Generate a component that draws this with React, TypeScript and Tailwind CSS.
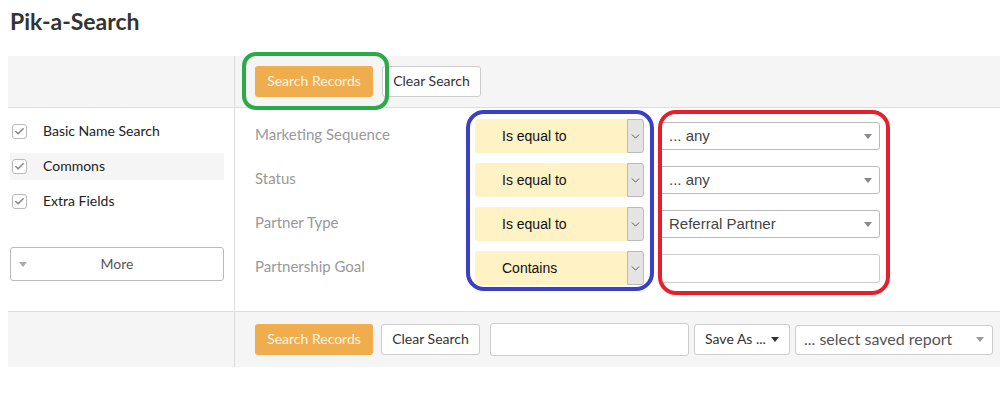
import { Check, ChevronDown } from "lucide-react";

const GROUPS = [
  { label: "Basic Name Search", active: false },
  { label: "Commons", active: true },
  { label: "Extra Fields", active: false },
];

const FIELDS = [
  { label: "Marketing Sequence", op: "Is equal to", value: "... any", kind: "select" },
  { label: "Status", op: "Is equal to", value: "... any", kind: "select" },
  { label: "Partner Type", op: "Is equal to", value: "Referral Partner", kind: "select" },
  { label: "Partnership Goal", op: "Contains", value: "", kind: "input" },
];

function Caret({ className = "" }: { className?: string }) {
  return (
    <svg viewBox="0 0 8 5" className={"h-[5px] w-[8px] " + className}>
      <path d="M0 0 L8 0 L4 5 Z" fill="currentColor" />
    </svg>
  );
}

function OrangeButton() {
  return (
    <button className="h-[31px] w-[118px] rounded-[3px] bg-[#f0ad4e] pb-[2px] text-[14px] text-[#fff6e6]">
      Search Records
    </button>
  );
}

function ClearButton() {
  return (
    <button className="h-[31px] w-[99px] rounded-[3px] border border-[#cccccc] bg-white pb-[2px] text-[14px] text-[#333]">
      Clear Search
    </button>
  );
}

export default function App() {
  return (
    <div
      className="relative h-[400px] w-[1000px] overflow-hidden bg-white"
      style={{ fontFamily: "Lato, 'Open Sans', sans-serif" }}
    >
      <h1 className="h-[56px] pl-[10px] pt-[4px] text-[23px] font-bold text-[#333]">Pik-a-Search</h1>

      <div className="ml-[8px]">
        {/* top toolbar */}
        <div className="flex h-[52px] border-b border-[#dddddd] bg-[#f5f5f5]">
          <div className="w-[227px] border-r border-[#dddddd]" />
          <div className="flex items-center gap-[9px] pb-[1px] pl-[20px]">
            <OrangeButton />
            <ClearButton />
          </div>
        </div>

        {/* body */}
        <div className="flex h-[203px]">
          <div className="w-[227px] border-r border-[#dddddd] pl-[2px] pr-[10px] pt-[10px]">
            <div className="flex flex-col gap-[8px]">
              {GROUPS.map((g) => (
                <div
                  key={g.label}
                  className={"flex h-[27px] items-center gap-[16px] pl-[2px] " + (g.active ? "bg-[#f5f5f5]" : "")}
                >
                  <span className="flex h-[15px] w-[15px] items-center justify-center rounded-[3px] border border-[#bbbbbb] bg-white text-[#8a8a8a]">
                    <Check size={11} strokeWidth={3.5} />
                  </span>
                  <span className="pb-[2px] text-[14px] text-[#222]">{g.label}</span>
                </div>
              ))}
            </div>
            <button className="relative mt-[32px] flex h-[34px] w-[214px] items-center justify-center rounded-[3px] border border-[#bbbbbb] bg-white pb-[2px] text-[14px] text-[#555]">
              <Caret className="absolute left-[8px] top-[14px] text-[#aaa]" />
              More
            </button>
          </div>

          <div className="flex flex-col gap-[10px] pl-[20px] pt-[11px]">
            {FIELDS.map((f) => (
              <div key={f.label} className="flex h-[34px] items-center">
                <span className="w-[220px] pb-[3px] text-[15px] text-[#999]">{f.label}</span>
                <div
                  className="flex h-[34px] w-[169px] items-center justify-between rounded-[3px] bg-[#fff2c4] pl-[27px] text-[14px] text-[#111]"
                  style={{ fontFamily: "'Liberation Sans', Arial, sans-serif" }}
                >
                  {f.op}
                  <span className="flex h-[34px] w-[17px] items-center justify-center rounded-r-[3px] border border-[#bbbbbb] bg-[#e4e4e4] text-[#444]">
                    <ChevronDown size={13} strokeWidth={1.6} />
                  </span>
                </div>
                {f.kind === "select" ? (
                  <div
                    className="ml-[16px] flex h-[28px] w-[220px] items-center justify-between rounded-[3px] border border-[#bbbbbb] bg-white pl-[8px] pr-[7px] text-[15px] text-[#444]"
                    style={{ fontFamily: "'Liberation Sans', Arial, sans-serif" }}
                  >
                    {f.value}
                    <Caret className="text-[#888]" />
                  </div>
                ) : (
                  <div className="ml-[16px] h-[29px] w-[220px] rounded-[3px] border border-[#cccccc] bg-white" />
                )}
              </div>
            ))}
          </div>
        </div>

        {/* bottom toolbar */}
        <div className="flex h-[56px] border-t border-[#dddddd] bg-[#f5f5f5]">
          <div className="w-[227px] border-r border-[#dddddd]" />
          <div className="flex items-center pl-[20px]">
            <OrangeButton />
            <div className="ml-[8px]">
              <ClearButton />
            </div>
            <div className="ml-[10px] h-[33px] w-[199px] rounded-[3px] border border-[#cccccc] bg-white" />
            <button className="ml-[5px] flex h-[31px] w-[96px] items-center justify-center gap-[5px] rounded-[3px] border border-[#cccccc] bg-white pb-[2px] text-[14px] text-[#333]">
              Save As ...
              <Caret className="mt-[2px] text-[#333]" />
            </button>
            <div className="ml-[5px] flex h-[30px] w-[198px] items-center justify-between rounded-[3px] border border-[#cccccc] bg-white pb-[2px] pl-[8px] pr-[8px] text-[16px] text-[#555]">
              ... select saved report
              <Caret className="mt-[2px] text-[#999]" />
            </div>
          </div>
        </div>
      </div>

      {/* annotation outlines */}
      <div className="pointer-events-none absolute left-[242px] top-[52px] h-[58px] w-[147px] rounded-[14px] border-[4px] border-[#2aaa48]" />
      <div className="pointer-events-none absolute left-[466px] top-[110px] h-[181px] w-[188px] rounded-[18px] border-[4px] border-[#3a3fc6]" />
      <div className="pointer-events-none absolute left-[658px] top-[110px] h-[185px] w-[232px] rounded-[18px] border-[4px] border-[#e3202b]" />
    </div>
  );
}
